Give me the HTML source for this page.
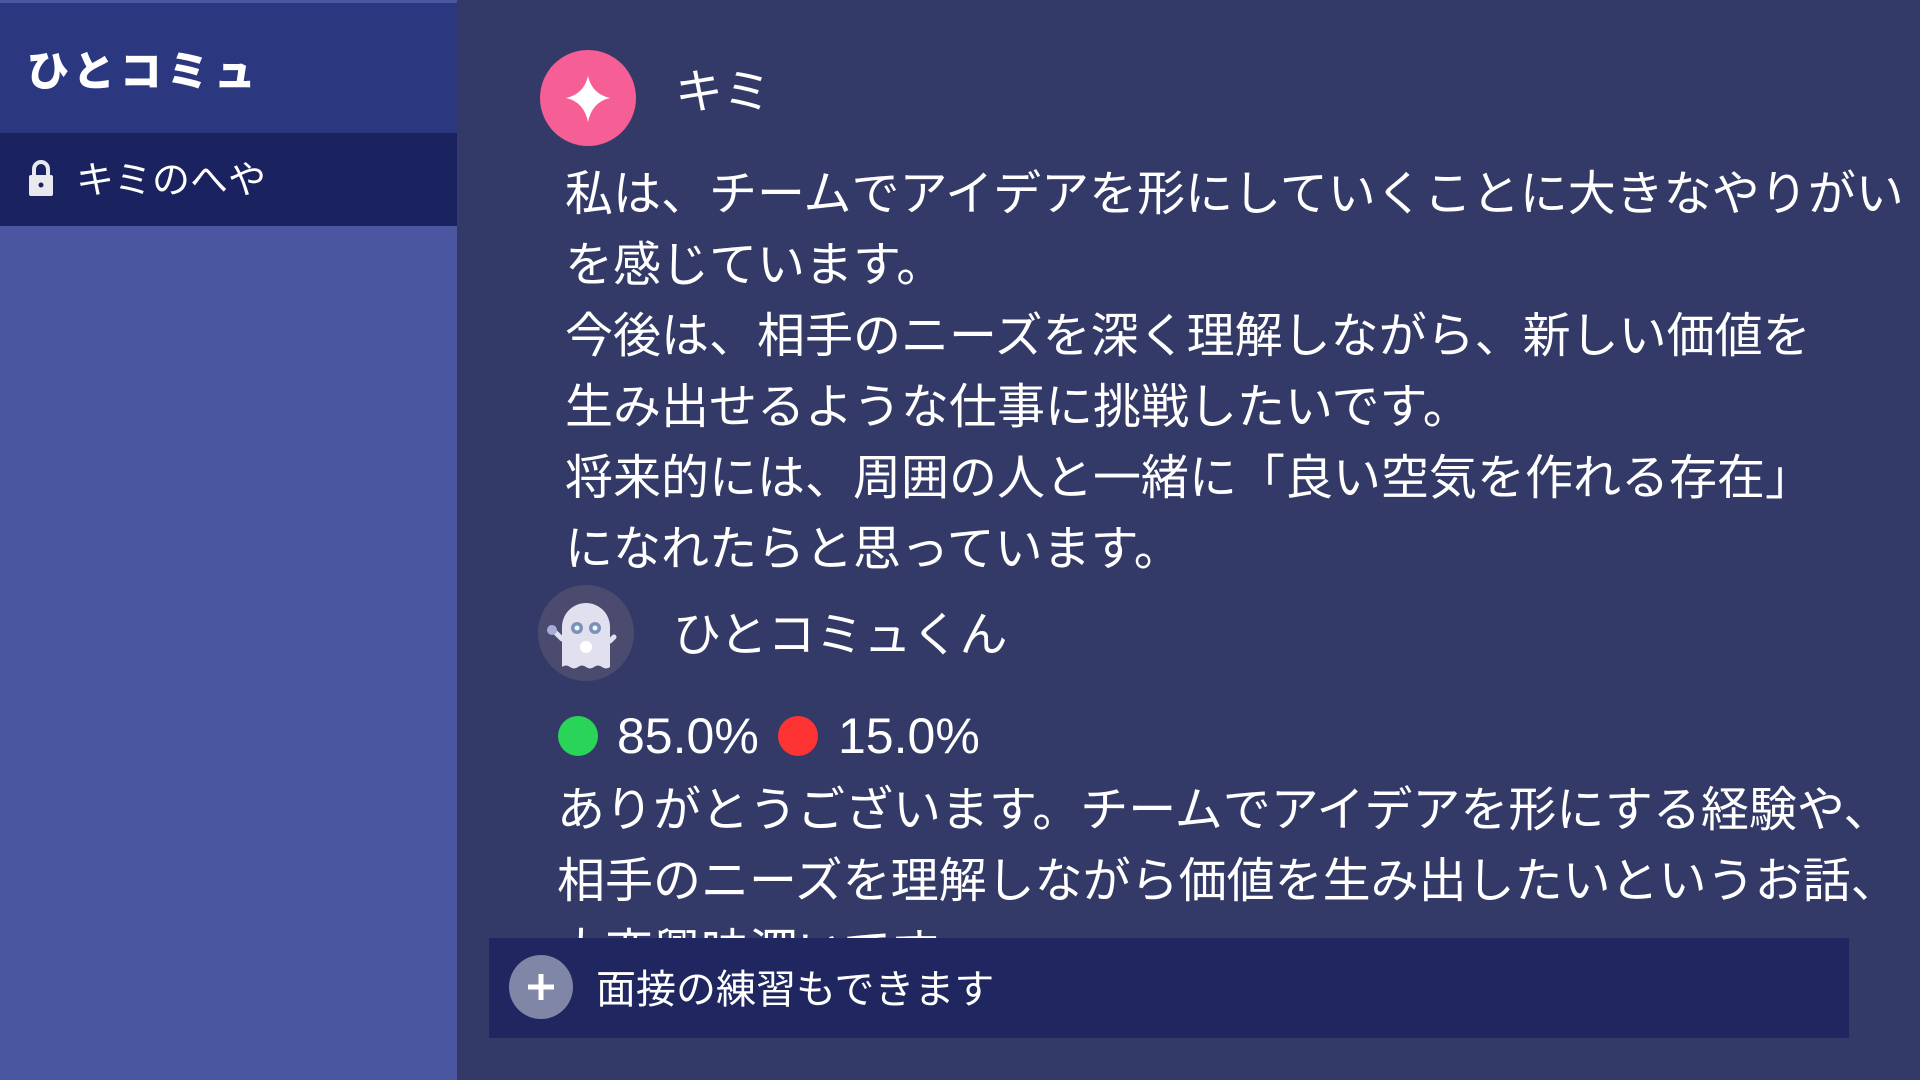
<!DOCTYPE html>
<html><head><meta charset="utf-8">
<style>
*{margin:0;padding:0;box-sizing:border-box}
body{width:1920px;height:1080px;overflow:hidden;background:#343a68;font-family:"Liberation Sans","Noto Sans CJK JP",sans-serif;color:#fff;position:relative}
.a{position:absolute;white-space:nowrap;line-height:1}
#side{position:absolute;left:0;top:0;width:457px;height:1080px;background:#4a56a0}
#hdr{position:absolute;left:0;top:3px;width:457px;height:130px;background:#2b3880}
#sel{position:absolute;left:0;top:133px;width:457px;height:93px;background:#1a2260}
.t{font-size:48px;font-family:"Noto Sans CJK JP",sans-serif}
#bar{position:absolute;left:489px;top:938px;width:1360px;height:100px;background:#1f2660;z-index:2}
</style></head><body>
<div id="side"></div>
<div id="hdr"></div>
<div id="sel"></div>
<div class="a" style="left:27px;top:48px;font-size:42px;font-weight:900;letter-spacing:5px;font-family:'Noto Sans CJK JP',sans-serif">ひとコミュ</div>
<svg class="a" style="left:26px;top:158px" width="30" height="40" viewBox="0 0 30 40"><path d="M8 18V11a7 7 0 0 1 14 0v7" stroke="#e8e8ee" stroke-width="4" fill="none"/><rect x="3" y="17" width="24" height="21" rx="2" fill="#e8e8ee"/><circle cx="15" cy="27" r="2.5" fill="#1a2260"/></svg>
<div class="a" style="left:76px;top:158px;font-size:38px;font-family:'Noto Sans CJK JP',sans-serif">キミのへや</div>

<svg class="a" style="left:540px;top:50px" width="96" height="96" viewBox="0 0 96 96"><circle cx="48" cy="48" r="48" fill="#f65f95"/><path d="M48 26 Q52 44 70 48 Q52 52 48 72 Q44 52 26 48 Q44 44 48 26Z" fill="#fff"/></svg>
<div class="a t" style="left:675px;top:63px">キミ</div>
<div class="a t" style="left:565px;top:165px">私は、チームでアイデアを形にしていくことに大きなやりがい</div>
<div class="a t" style="left:565px;top:236px">を感じています。</div>
<div class="a t" style="left:565px;top:307px">今後は、相手のニーズを深く理解しながら、新しい価値を</div>
<div class="a t" style="left:565px;top:378px">生み出せるような仕事に挑戦したいです。</div>
<div class="a t" style="left:565px;top:449px">将来的には、周囲の人と一緒に「良い空気を作れる存在」</div>
<div class="a t" style="left:565px;top:520px">になれたらと思っています。</div>

<svg class="a" style="left:538px;top:585px" width="96" height="96" viewBox="0 0 96 96"><circle cx="48" cy="48" r="48" fill="#4a4b6e"/><path d="M24 82V42a24 24 0 0 1 48 0v40q-4 3-8 0q-4-3-8 0q-4 3-8 0q-4-3-8 0q-4 3-8 0q-4-3-8 0z" fill="#e0e0ee"/><path d="M24 54l-8-8M72 56l4-4" stroke="#e0e0ee" stroke-width="5" stroke-linecap="round"/><circle cx="14" cy="45" r="5" fill="#a9acd8"/><circle cx="39" cy="43" r="6" fill="#7f8fb8"/><circle cx="57" cy="43" r="6" fill="#7f8fb8"/><circle cx="39" cy="43" r="2.5" fill="#dff"/><circle cx="57" cy="43" r="2.5" fill="#dff"/><circle cx="48" cy="62" r="6" fill="#fff"/></svg>
<div class="a t" style="left:673px;top:606px">ひとコミュくん</div>

<div class="a" style="left:558px;top:716px;width:40px;height:40px;border-radius:50%;background:#2ad458"></div>
<div class="a" style="left:617px;top:711px;font-size:50px">85.0%</div>
<div class="a" style="left:778px;top:716px;width:40px;height:40px;border-radius:50%;background:#fe3333"></div>
<div class="a" style="left:838px;top:711px;font-size:50px">15.0%</div>
<div class="a t" style="left:557px;top:781px">ありがとうございます。チームでアイデアを形にする経験や、</div>
<div class="a t" style="left:557px;top:852px">相手のニーズを理解しながら価値を生み出したいというお話、</div>
<div class="a t" style="left:557px;top:923px">大変興味深いです。</div>

<div id="bar">
<svg class="a" style="left:20px;top:17px" width="64" height="64" viewBox="0 0 64 64"><circle cx="32" cy="32" r="32" fill="#7f86a6"/><path d="M32 19v26M19 32h26" stroke="#fff" stroke-width="5"/></svg>
<div class="a" style="left:107px;top:28px;font-size:40px;font-family:'Noto Sans CJK JP',sans-serif">面接の練習もできます</div>
</div>
</body></html>
